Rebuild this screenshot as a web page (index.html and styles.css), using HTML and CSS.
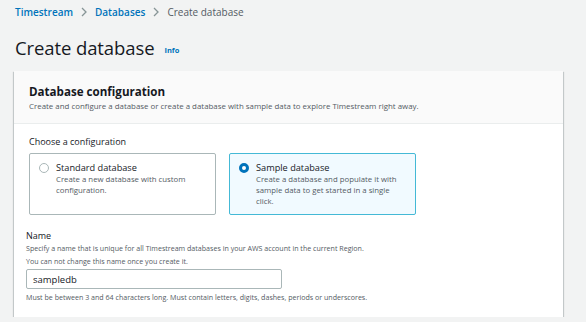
FILE: index.html
```html
<!DOCTYPE html>
<html lang="en">
<head>
  <meta charset="UTF-8" />
  <title>Create database</title>
  <link rel="stylesheet" href="styles.css">
</head>
<body>
  <nav class="crumbs">
    <a href="#">Timestream</a>
    <svg class="sep" width="6" height="10" viewBox="0 0 6 10"><path d="M1 1l4 4-4 4" fill="none" stroke="#879596" stroke-width="1.3"/></svg>
    <a href="#">Databases</a>
    <svg class="sep" width="6" height="10" viewBox="0 0 6 10"><path d="M1 1l4 4-4 4" fill="none" stroke="#879596" stroke-width="1.3"/></svg>
    <span class="current">Create database</span>
  </nav>

  <div class="page-title">
    <h1>Create database</h1>
    <a class="info" href="#">Info</a>
  </div>

  <section class="panel">
    <header class="panel-head">
      <h2>Database configuration</h2>
      <p>Create and configure a database or create a database with sample data to explore Timestream right away.</p>
    </header>

    <div class="panel-body">
      <div class="field-label">Choose a configuration</div>
      <div class="tiles">
        <label class="tile">
          <span class="radio"></span>
          <span class="tile-text">
            <span class="tile-title">Standard database</span>
            <span class="tile-desc">Create a new database with custom configuration.</span>
          </span>
        </label>
        <label class="tile selected">
          <span class="radio checked"></span>
          <span class="tile-text">
            <span class="tile-title">Sample database</span>
            <span class="tile-desc">Create a database and populate it with sample data to get started in a single click.</span>
          </span>
        </label>
      </div>

      <div class="name-field">
        <div class="field-label">Name</div>
        <p class="hint">Specify a name that is unique for all Timestream databases in your AWS account in the current Region.<br>You can not change this name once you create it.</p>
        <input type="text" value="sampledb" />
        <p class="hint">Must be between 3 and 64 characters long. Must contain letters, digits, dashes, periods or underscores.</p>
      </div>
    </div>
  </section>
</body>
</html>
```

FILE: styles.css
```css
:root {
  --bg: #f2f3f3;
  --text: #16191f;
  --muted: #545b64;
  --link: #0073bb;
  --border: #aab7b8;
}

body {
  margin: 0;
  padding: 5px 23px 0 15px;
  background: var(--bg);
  color: var(--text);
  font-family: 'Open Sans', sans-serif;
  font-size: 10px;
}

.crumbs {
  display: flex;
  align-items: center;
  gap: 8px;
  font-size: 10px;
  height: 14px;
}

.crumbs a {
  color: var(--link);
  text-decoration: none;
  font-weight: 600;
}

.crumbs .current {
  color: var(--muted);
}

.page-title {
  display: flex;
  align-items: center;
  gap: 10px;
  margin: 17px 0 11px;
}

h1 {
  margin: 0;
  font-size: 18.5px;
  font-weight: 400;
  line-height: 24px;
  letter-spacing: -0.1px;
}

.info {
  color: var(--link);
  font-size: 7.5px;
  font-weight: 700;
  text-decoration: none;
  margin-top: 4px;
}

.panel {
  margin-left: -1px;
  background: #fff;
  box-shadow: 0 1px 1px rgba(0,28,36,0.3), 1px 1px 1px rgba(0,28,36,0.15), -1px 1px 1px rgba(0,28,36,0.15);
}

.panel-head {
  background: #fafafa;
  border-bottom: 1px solid #eaeded;
  padding: 13px 15px 11px;
}

.panel-head h2 {
  margin: 0;
  font-size: 11.6px;
  font-weight: 700;
  line-height: 15px;
}

.panel-head p {
  margin: 2px 0 0;
  font-size: 7.9px;
  line-height: 11px;
  color: var(--muted);
}

.panel-body {
  padding: 11px 15px 13px;
}

.field-label {
  font-size: 9px;
  line-height: 13px;
}

.tiles {
  display: flex;
  gap: 13px;
  margin-top: 5px;
}

.tile {
  width: 187px;
  height: 62px;
  box-sizing: border-box;
  border: 1px solid var(--border);
  border-radius: 2px;
  display: flex;
  align-items: flex-start;
  gap: 7px;
  padding: 8px 11px 0 9px;
}

.tile.selected {
  background: #f1faff;
  border-color: #44b9d6;
}

.radio {
  flex: none;
  width: 10px;
  height: 10px;
  border: 1px solid var(--border);
  border-radius: 50%;
  margin-top: 1px;
  box-sizing: border-box;
  background: #fff;
}

.radio.checked {
  border: 3px solid #0073bb;
}

.tile-text {
  display: flex;
  flex-direction: column;
}

.tile-title {
  font-size: 9.2px;
  line-height: 12px;
}

.tile-desc {
  color: var(--muted);
  font-size: 7.8px;
  line-height: 11px;
}

.name-field {
  margin-top: 14px;
  margin-left: -3px;
}

.hint {
  margin: 0;
  color: var(--muted);
  font-size: 7.1px;
  line-height: 13px;
}

input {
  display: block;
  width: 256px;
  height: 20px;
  box-sizing: border-box;
  margin: 1px 0 2px;
  border: 1px solid var(--border);
  border-radius: 2px;
  padding: 0 6px;
  font-family: inherit;
  font-size: 9.5px;
  color: var(--text);
}
```
